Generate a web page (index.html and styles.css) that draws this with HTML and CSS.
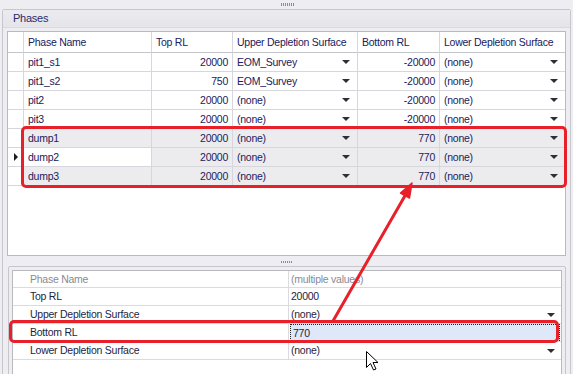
FILE: index.html
```html
<!DOCTYPE html>
<html lang="en">
<head>
    <meta charset="UTF-8">
    <title>Phases</title>
    <link rel="stylesheet" href="styles.css">
</head>
<body>
    <div class="grip-top"><span class="dots"></span></div>

    <div class="panel">
        <div class="panel-head">Phases</div>
        <div class="panel-body">
            <div class="grid">
                <div class="row head">
                    <div class="cell ind"></div>
                    <div class="cell">Phase Name</div>
                    <div class="cell">Top RL</div>
                    <div class="cell">Upper Depletion Surface</div>
                    <div class="cell">Bottom RL</div>
                    <div class="cell">Lower Depletion Surface</div>
                </div>
                <div class="row">
                    <div class="cell ind"></div>
                    <div class="cell">pit1_s1</div>
                    <div class="cell num">20000</div>
                    <div class="cell combo">EOM_Survey<span class="drop"></span></div>
                    <div class="cell num">-20000</div>
                    <div class="cell combo">(none)<span class="drop"></span></div>
                </div>
                <div class="row">
                    <div class="cell ind"></div>
                    <div class="cell">pit1_s2</div>
                    <div class="cell num">750</div>
                    <div class="cell combo">EOM_Survey<span class="drop"></span></div>
                    <div class="cell num">-20000</div>
                    <div class="cell combo">(none)<span class="drop"></span></div>
                </div>
                <div class="row">
                    <div class="cell ind"></div>
                    <div class="cell">pit2</div>
                    <div class="cell num">20000</div>
                    <div class="cell combo">(none)<span class="drop"></span></div>
                    <div class="cell num">-20000</div>
                    <div class="cell combo">(none)<span class="drop"></span></div>
                </div>
                <div class="row">
                    <div class="cell ind"></div>
                    <div class="cell">pit3</div>
                    <div class="cell num">20000</div>
                    <div class="cell combo">(none)<span class="drop"></span></div>
                    <div class="cell num">-20000</div>
                    <div class="cell combo">(none)<span class="drop"></span></div>
                </div>
                <div class="row selected">
                    <div class="cell ind"></div>
                    <div class="cell">dump1</div>
                    <div class="cell num">20000</div>
                    <div class="cell combo">(none)<span class="drop"></span></div>
                    <div class="cell num">770</div>
                    <div class="cell combo">(none)<span class="drop"></span></div>
                </div>
                <div class="row selected">
                    <div class="cell ind"><span class="current"></span></div>
                    <div class="cell focused">dump2</div>
                    <div class="cell num">20000</div>
                    <div class="cell combo">(none)<span class="drop"></span></div>
                    <div class="cell num">770</div>
                    <div class="cell combo">(none)<span class="drop"></span></div>
                </div>
                <div class="row selected">
                    <div class="cell ind"></div>
                    <div class="cell">dump3</div>
                    <div class="cell num">20000</div>
                    <div class="cell combo">(none)<span class="drop"></span></div>
                    <div class="cell num">770</div>
                    <div class="cell combo">(none)<span class="drop"></span></div>
                </div>
            </div>

            <div class="splitter"><span class="dots"></span></div>

            <div class="props-box">
                <div class="props">
                    <div class="prow first">
                        <div class="plabel muted">Phase Name</div>
                        <div class="pval muted">(multiple values)</div>
                    </div>
                    <div class="prow">
                        <div class="plabel">Top RL</div>
                        <div class="pval">20000</div>
                    </div>
                    <div class="prow">
                        <div class="plabel">Upper Depletion Surface</div>
                        <div class="pval combo">(none)<span class="drop"></span></div>
                    </div>
                    <div class="prow">
                        <div class="plabel">Bottom RL</div>
                        <div class="pval"><span class="editing">770</span></div>
                    </div>
                    <div class="prow">
                        <div class="plabel">Lower Depletion Surface</div>
                        <div class="pval combo">(none)<span class="drop"></span></div>
                    </div>
                </div>
            </div>
        </div>
    </div>

    <!-- annotation layer -->
    <div class="marks">
        <div class="mark mark-rows"></div>
        <div class="mark mark-prop"></div>
        <svg class="overlay" width="573" height="374" viewBox="0 0 573 374">
            <line x1="333" y1="321" x2="406" y2="194" stroke="#e8202a" stroke-width="3" stroke-linecap="round"/>
            <polygon points="412,183 409.5,198 400.5,193" fill="#e8202a" stroke="#e8202a" stroke-width="1.5" stroke-linejoin="round"/>
            <path d="M366.5 351.5 L366.5 367.5 L370.5 363.5 L373.5 370 L376 369 L373 362.5 L378 362.5 Z" fill="#fff" stroke="#000" stroke-width="1" stroke-linejoin="miter"/>
        </svg>
    </div>
</body>
</html>
```

FILE: styles.css
```css
* {
    box-sizing: border-box;
}
body {
    margin: 0;
    width: 573px;
    height: 374px;
    overflow: hidden;
    position: relative;
    background: #eeeef2;
    font-family: "Liberation Sans", Arial, sans-serif;
    font-size: 10.5px;
    letter-spacing: -0.25px;
    color: #20205c;
}
.dots {
    display: block;
    width: 13px;
    height: 3px;
    background: repeating-linear-gradient(90deg, #8c8c96 0 1px, transparent 1px 2px);
}
.grip-top {
    height: 9px;
    display: flex;
    justify-content: center;
    align-items: center;
    padding-left: 1px;
}
.panel {
    margin: 0 2px;
    height: 370px;
    border: 1px solid #c6c6cc;
    border-radius: 2px 2px 0 0;
    background: #eeeef2;
    display: flex;
    flex-direction: column;
}
.panel-head {
    height: 18px;
    line-height: 17px;
    padding-left: 10px;
    font-size: 11px;
    color: #2a2a6a;
    background: linear-gradient(#ececf0, #e4e4e9);
    border-bottom: 1px solid #dadade;
}
.panel-body {
    flex: 1;
    padding: 3px 4px 0 4px;
    display: flex;
    flex-direction: column;
}

/* data grid */
.grid {
    height: 225px;
    border: 1px solid #b9b9c0;
    background: #fff;
}
.row {
    display: grid;
    grid-template-columns: 16px 128px 81px 125px 82px 1fr;
    height: 19px;
}
.row.head {
    height: 21px;
}
.cell {
    border-right: 1px solid #d6d6dc;
    border-bottom: 1px solid #d6d6dc;
    padding: 0 4px;
    line-height: 18px;
    white-space: nowrap;
    overflow: hidden;
}
.row.head .cell {
    line-height: 20px;
    border-bottom-color: #c4c4cb;
}
.row .cell:last-child {
    border-right: none;
}
.cell.ind {
    padding: 0;
    display: flex;
    align-items: center;
    justify-content: center;
}
.cell.num {
    text-align: right;
}
.combo {
    display: flex;
    justify-content: space-between;
    align-items: center;
    padding-right: 7px;
}
.drop {
    width: 0;
    height: 0;
    border-left: 4px solid transparent;
    border-right: 4px solid transparent;
    border-top: 4px solid #2e2e36;
}
.row.selected .cell {
    background: #ececef;
}
.row.selected .cell.ind {
    background: #fff;
}
.row.selected .cell.focused {
    background: #fff;
}
.current {
    width: 0;
    height: 0;
    border-top: 4px solid transparent;
    border-bottom: 4px solid transparent;
    border-left: 4px solid #1c1c24;
    margin-left: 1px;
}

/* splitter */
.splitter {
    height: 10px;
    display: flex;
    justify-content: center;
    align-items: flex-end;
    padding-bottom: 3px;
}
.splitter .dots {
    width: 12px;
    height: 2px;
}

/* property grid */
.props-box {
    flex: 1;
    margin-left: 1px;
    border: 1px solid #c6c6cc;
    border-radius: 2px 2px 0 0;
    padding: 3px 3px 0 3px;
}
.props {
    height: 100%;
    border: 1px solid #b9b9c0;
    background: #fff;
    color: #1e1e3e;
}
.prow {
    display: grid;
    grid-template-columns: 276px 1fr;
    height: 18px;
    border-bottom: 1px solid #dadadf;
}
.prow.first {
    height: 17px;
}
.plabel {
    padding-left: 17px;
    line-height: 17px;
    border-right: 1px solid #dadadf;
}
.pval {
    padding-left: 2px;
    line-height: 17px;
}
.pval.combo {
    padding-right: 6px;
}
.muted {
    color: #8a8a94;
}
.editing {
    display: block;
    width: 270px;
    height: 17px;
    margin-left: -1px;
    padding-left: 2px;
    line-height: 16px;
    background: #dee8f8;
    border: 1px dotted #222;
}

/* annotation layer */
.marks {
    position: absolute;
    left: 0;
    top: 0;
    width: 573px;
    height: 374px;
    pointer-events: none;
}
.mark {
    position: absolute;
    border: 3px solid #e8202a;
    border-radius: 5px;
}
.mark-rows {
    left: 21px;
    top: 126px;
    width: 546px;
    height: 62px;
}
.mark-prop {
    left: 9px;
    top: 320px;
    width: 550px;
    height: 23px;
}
.overlay {
    position: absolute;
    left: 0;
    top: 0;
}
```
